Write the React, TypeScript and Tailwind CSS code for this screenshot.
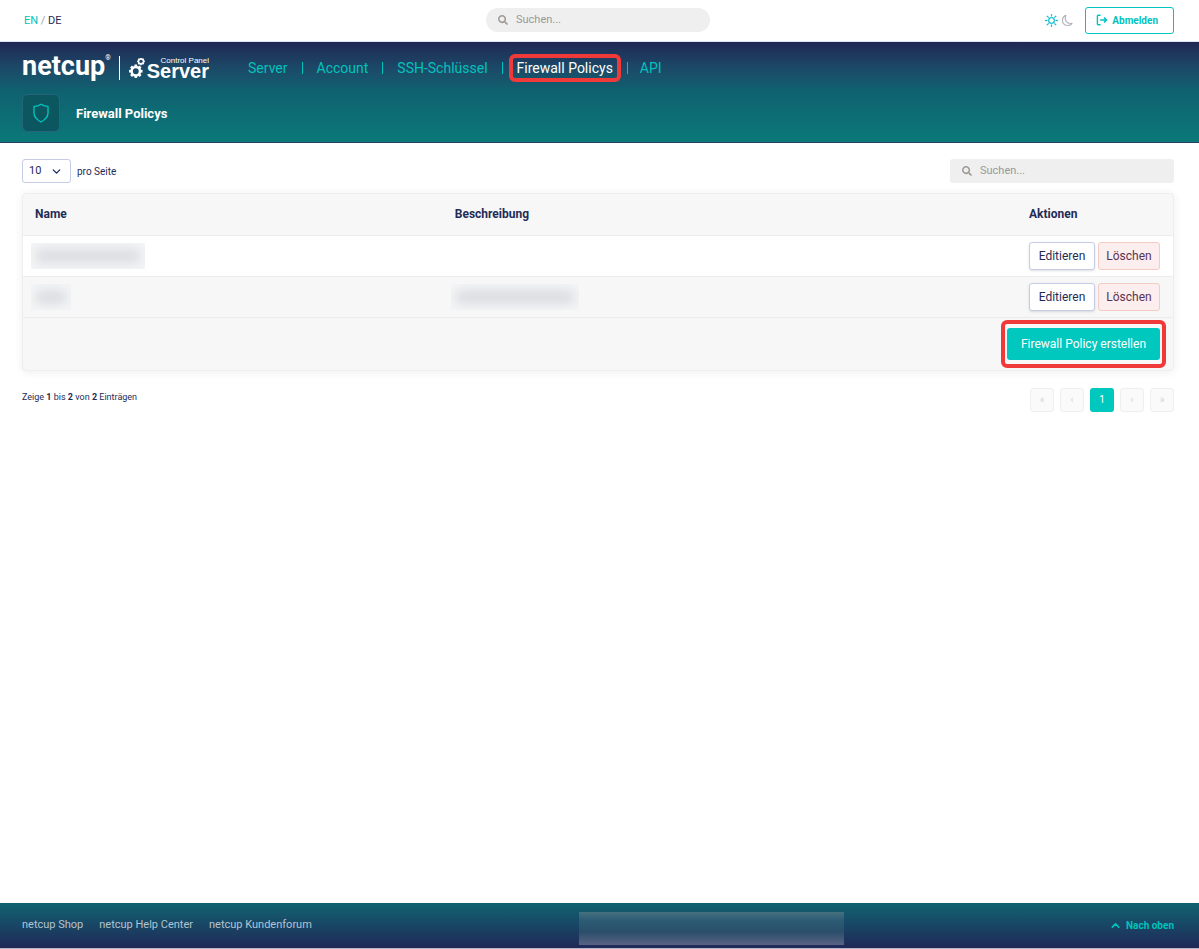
import { useState } from 'react';
import { BsMoon, BsSun } from 'react-icons/bs';
import { FaSearch } from 'react-icons/fa';
import { ChevronDown, ChevronUp } from 'lucide-react';

interface Policy {
  id: number;
  nameMask: string;
  descriptionMask?: string;
}

const NAV_ITEMS = ['Server', 'Account', 'SSH-Schlüssel', 'Firewall Policys', 'API'];
const FOOTER_LINKS = ['netcup Shop', 'netcup Help Center', 'netcup Kundenforum'];
const PAGES = ['«', '‹', '1', '›', '»'];

const POLICIES: Policy[] = [
  { id: 1, nameMask: 'w-[114px]' },
  { id: 2, nameMask: 'w-10', descriptionMask: 'w-32' },
];

function Gear({ cx, cy, r }: { cx: number; cy: number; r: number }) {
  return (
    <g transform={`translate(${cx} ${cy})`} stroke="currentColor" fill="none">
      <circle r={r} strokeWidth={r * 0.6} />
      {[0, 45, 90, 135, 180, 225, 270, 315].map((angle) => (
        <path key={angle} d={`M0 ${-r}V${-r * 1.6}`} strokeWidth={r * 0.65} transform={`rotate(${angle})`} />
      ))}
    </g>
  );
}

function Logo() {
  return (
    <a href="#" className="flex items-center text-white">
      <span className="flex h-7 items-start">
        <span className="text-[27px] font-bold leading-6">netcup</span>
        <span className="text-[7px] leading-2">®</span>
      </span>
      <span className="ml-2 h-6 w-px bg-white" />
      <svg className="ml-[9px] h-5 w-4" viewBox="0 0 16 20">
        <Gear cx={6.8} cy={13.2} r={4.2} />
        <Gear cx={12} cy={3.4} r={2.4} />
      </svg>
      <span className="ml-0.5 flex flex-col items-end pb-0.5 font-['Liberation_Sans',sans-serif]">
        <span className="text-[8px] leading-2">Control Panel</span>
        <span className="text-xl font-bold leading-3">Server</span>
      </span>
    </a>
  );
}

function LogoutIcon() {
  return (
    <svg className="h-3 w-3" viewBox="0 0 12 12" fill="none" stroke="currentColor" strokeWidth="1.4">
      <path d="M4.5 1.2H2.2a.8.8 0 0 0-.8.8v8a.8.8 0 0 0 .8.8h2.3M4.2 6h6M8 3.6 10.6 6 8 8.4" />
    </svg>
  );
}

function SearchBox({ label, className }: { label: string; className: string }) {
  return (
    <label className={`flex h-6 w-56 items-center gap-2 bg-[#efefef] px-3 ${className}`}>
      <FaSearch size={10} className="text-[#a09a94]" />
      <input
        type="text"
        aria-label={label}
        placeholder="Suchen..."
        className="min-w-0 flex-1 bg-transparent pt-px text-[11px] outline-none placeholder:text-[#999]"
      />
    </label>
  );
}

function Masked({ width }: { width: string }) {
  return (
    <div className={`-ml-1 flex h-[26px] items-center overflow-hidden bg-[#f4f5f6] ${width}`}>
      <div className="mx-1 h-3 flex-1 rounded-full bg-[#d5d8de] blur-[6px]" />
    </div>
  );
}

export default function App() {
  const [pageSize, setPageSize] = useState('10');

  return (
    <div className="flex min-h-screen flex-col bg-white font-[Roboto,sans-serif] text-[#1f2c55]">
      {/* Top bar */}
      <div className="grid h-[42px] grid-cols-3 items-center border-b border-[#dde2f0] pr-[25px] pb-px pl-[22px]">
        <div className="pt-0.5 pl-0.5 text-[11px]">
          <a href="#" className="text-[#00c3bd]">EN</a>
          <span className="text-gray-400"> / </span>
          <a href="#">DE</a>
        </div>
        <SearchBox label="Suche" className="justify-self-center rounded-full" />
        <div className="flex items-center justify-end">
          <button type="button" aria-label="Heller Modus" className="text-[#00b9d0]">
            <BsSun size={13} strokeWidth={0.4} />
          </button>
          <button type="button" aria-label="Dunkler Modus" className="ml-1 text-[#a9abb5]">
            <BsMoon size={11} strokeWidth={0.5} />
          </button>
          <button
            type="button"
            className="ml-3 flex h-[27px] items-center gap-1 rounded-[3px] border border-[#00c3bd] pr-[15px] pl-2.5 text-[10px] font-bold text-[#00c3bd]"
          >
            <LogoutIcon />
            Abmelden
          </button>
        </div>
      </div>

      {/* Header */}
      <header className="border-b border-[#254263] bg-[linear-gradient(#202855,#1c4967_26%,#0f6270_50%,#0b7979)] px-[22px] pt-3 pb-2.5">
        <div className="flex h-7 items-center">
          <Logo />
          <nav className="ml-[25px] flex items-center divide-x divide-[#00c3bd] text-sm leading-3">
            {NAV_ITEMS.map((item) => (
              <a
                key={item}
                href="#"
                className={`relative px-3.5 last:pl-3 ${item === 'Firewall Policys' ? 'text-white' : 'text-[#00c3bd]'}`}
              >
                {item}
                {item === 'Firewall Policys' && (
                  <span className="absolute inset-x-1.5 -inset-y-2 rounded-md border-4 border-[#f03a3a]" />
                )}
              </a>
            ))}
          </nav>
        </div>
        <div className="mt-3 flex items-center gap-4">
          <div className="flex size-[38px] items-center justify-center rounded-md border border-[#27647a] bg-[#0b565f]">
            <svg className="h-5 w-4" viewBox="0 0 16 20" fill="none" stroke="#00c8bd" strokeWidth="1.3">
              <path d="M8 1.2C10 2.6 12.5 3.3 15 3.3V10c0 4-3 6.8-7 9-4-2.2-7-5-7-9V3.3C3.5 3.3 6 2.6 8 1.2Z" strokeLinejoin="round" />
            </svg>
          </div>
          <h1 className="pt-0.5 text-[13px] font-bold text-white">Firewall Policys</h1>
        </div>
      </header>

      <main className="flex-1 pt-4 pr-[25px] pl-[22px]">
        <div className="flex items-center justify-between">
          <label className="flex items-center gap-1.5 text-[10px]">
            <span className="relative flex">
              <select
                value={pageSize}
                onChange={(e) => setPageSize(e.target.value)}
                className="h-6 w-[49px] appearance-none rounded-[3px] border border-[#c5cce6] bg-white pl-1.5 text-[11px]"
              >
                <option>10</option>
                <option>25</option>
                <option>50</option>
              </select>
              <ChevronDown size={13} strokeWidth={2.5} className="pointer-events-none absolute top-1.5 right-2" />
            </span>
            pro Seite
          </label>
          <SearchBox label="Policys durchsuchen" className="rounded-[3px]" />
        </div>

        <div className="mt-2.5 rounded border border-[#eee] bg-[#f7f7f7] shadow-[0_1px_10px_rgba(0,0,0,0.07)]">
          <table className="w-full table-fixed text-left text-xs">
            <thead>
              <tr className="h-[41px] border-b border-[#ececec]">
                <th className="w-[36.5%] px-3">Name</th>
                <th className="px-3">Beschreibung</th>
                <th className="w-[156px] px-3">Aktionen</th>
              </tr>
            </thead>
            <tbody>
              {POLICIES.map((policy) => (
                <tr key={policy.id} className="h-[41px] border-b border-[#ececec] odd:bg-white">
                  <td className="px-3">
                    <Masked width={policy.nameMask} />
                  </td>
                  <td className="px-3">
                    {policy.descriptionMask && <Masked width={policy.descriptionMask} />}
                  </td>
                  <td className="pl-3">
                    <div className="flex gap-[3px]">
                      <button
                        type="button"
                        className="h-7 w-[66px] rounded-[3px] border border-[#c5cce6] bg-white shadow-sm"
                      >
                        Editieren
                      </button>
                      <button
                        type="button"
                        className="h-7 w-[62px] rounded-[3px] border border-[#f3ccc4] bg-[#fceeee] text-[#5b3350]"
                      >
                        Löschen
                      </button>
                    </div>
                  </td>
                </tr>
              ))}
            </tbody>
          </table>
          <div className="flex h-[52px] items-center justify-end pr-[13px]">
            <div className="relative">
              <button type="button" className="h-8 w-[153px] rounded-[3px] bg-[#00c8be] text-xs text-white">
                Firewall Policy erstellen
              </button>
              <span className="pointer-events-none absolute -inset-x-1.5 -inset-y-2 rounded-md border-4 border-[#f03a3a]" />
            </div>
          </div>
        </div>

        <div className="mt-[17px] flex items-center justify-between">
          <p className="pb-1 text-[9px]">
            Zeige <b>1</b> bis <b>2</b> von <b>2</b> Einträgen
          </p>
          <div className="flex gap-1.5 text-[10px]">
            {PAGES.map((page) => (
              <button
                key={page}
                type="button"
                disabled={page !== '1'}
                className={`size-6 rounded-[3px] ${
                  page === '1' ? 'bg-[#00c8be] text-white' : 'border border-[#efefef] bg-[#fafafa] text-[#d5d5d5]'
                }`}
              >
                {page}
              </button>
            ))}
          </div>
        </div>
      </main>

      {/* Footer */}
      <footer className="grid h-[46px] grid-cols-[1fr_auto_1fr] items-center border-b border-[#b5b7c4] bg-[linear-gradient(#116371,#202858)] pr-[25px] pl-[22px] text-[11px]">
        <div className="flex gap-4 text-[#b3c3d0]">
          {FOOTER_LINKS.map((link) => (
            <a key={link} href="#">{link}</a>
          ))}
        </div>
        <div className="mb-[3px] ml-[226px] h-[33px] w-[265px] self-end bg-[linear-gradient(#45717f,#2c5b74_25%,#2a4e6b_60%,#5a6283)]" />
        <a href="#" className="flex items-center gap-1 justify-self-end text-[10px] font-bold text-[#00c3bd]">
          <ChevronUp size={13} strokeWidth={3} />
          Nach oben
        </a>
      </footer>
    </div>
  );
}
